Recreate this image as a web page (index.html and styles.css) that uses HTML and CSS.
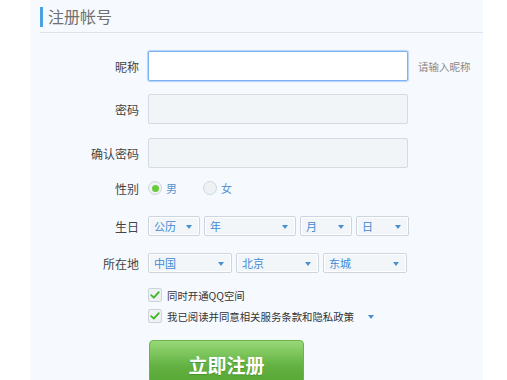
FILE: index.html
```html
<!DOCTYPE html>
<html lang="zh">
<head>
<meta charset="utf-8">
<link rel="stylesheet" href="styles.css">
</head>
<body>
<div class="panel">
  <div class="title"><span class="bar"></span><span class="title-text">注册帐号</span></div>
  <div class="form">
    <div class="row row-input first">
      <label class="label">昵称</label>
      <div class="input focus"></div>
      <span class="hint">请输入昵称</span>
    </div>
    <div class="row row-input">
      <label class="label">密码</label>
      <div class="input"></div>
    </div>
    <div class="row row-input">
      <label class="label">确认密码</label>
      <div class="input"></div>
    </div>
    <div class="row row-gender">
      <label class="label">性别</label>
      <span class="radio checked"></span><span class="opt">男</span>
      <span class="radio second"></span><span class="opt">女</span>
    </div>
    <div class="row row-select birth">
      <label class="label">生日</label>
      <div class="select w52">公历<i class="tri"></i></div>
      <div class="select w92">年<i class="tri"></i></div>
      <div class="select w52">月<i class="tri"></i></div>
      <div class="select w53">日<i class="tri"></i></div>
    </div>
    <div class="row row-select place">
      <label class="label">所在地</label>
      <div class="select w84">中国<i class="tri"></i></div>
      <div class="select w83">北京<i class="tri"></i></div>
      <div class="select w84">东城<i class="tri"></i></div>
    </div>
    <div class="row row-check c1">
      <span class="label"></span>
      <span class="checkbox"><svg viewBox="0 0 12 12" width="12" height="12"><path d="M2.2 6.2 L4.8 8.6 L9.8 3.2" fill="none" stroke="#3cb521" stroke-width="1.8" stroke-linecap="round" stroke-linejoin="round"/></svg></span>
      <span class="ctext">同时开通QQ空间</span>
    </div>
    <div class="row row-check c2">
      <span class="label"></span>
      <span class="checkbox"><svg viewBox="0 0 12 12" width="12" height="12"><path d="M2.2 6.2 L4.8 8.6 L9.8 3.2" fill="none" stroke="#3cb521" stroke-width="1.8" stroke-linecap="round" stroke-linejoin="round"/></svg></span>
      <span class="ctext">我已阅读并同意相关服务条款和隐私政策</span>
      <i class="tri tri-free"></i>
    </div>
    <div class="row row-btn">
      <span class="label"></span>
      <button class="submit">立即注册</button>
    </div>
  </div>
</div>
</body>
</html>
```
FILE: styles.css
```css
html, body {
  margin: 0;
  padding: 0;
  background: #ffffff;
  font-family: "Noto Sans CJK SC", "Noto Sans", sans-serif;
  height: 380px;
  overflow: hidden;
}
.panel {
  margin-left: 30px;
  width: 453px;
  height: 380px;
  background: #f6faff;
}
.title {
  margin-left: 10px;
  height: 32px;
  border-bottom: 1px solid #dde3ea;
  display: flex;
  align-items: center;
}
.bar {
  width: 3px;
  height: 20px;
  background: #4aa3e0;
  margin-right: 5px;
  margin-top: 1px;
}
.title-text {
  font-size: 16px;
  color: #707070;
  line-height: 20px;
}
.form {
  display: flex;
  flex-direction: column;
}
.row {
  display: flex;
  align-items: center;
}
.label {
  width: 109px;
  margin-right: 9px;
  text-align: right;
  font-size: 12px;
  color: #444;
  flex: none;
}
.row-input { height: 30px; margin-top: 13px; }
.row-input.first { margin-top: 18px; }
.row-input:nth-child(3) { margin-top: 14px; }
.input {
  width: 258px;
  height: 28px;
  border: 1px solid #d3dbe3;
  border-radius: 2px;
  background: #f1f5f8;
}
.input.focus {
  border-color: #7eb1f3;
  background: #ffffff;
  box-shadow: 0 0 1px 1px #b5d2f7;
}
.hint {
  margin-left: 10px;
  font-size: 10.5px;
  color: #888;
}
.row-gender { height: 20px; margin-top: 10px; }
.radio {
  width: 12px;
  height: 12px;
  border: 1px solid #cfd7df;
  border-radius: 50%;
  background: #eef2f5;
  display: flex;
  align-items: center;
  justify-content: center;
}
.radio.checked::after {
  content: "";
  width: 7px;
  height: 7px;
  border-radius: 50%;
  background: #6acb3a;
}
.radio.second { margin-left: 26px; }
.opt {
  margin-left: 4px;
  font-size: 11px;
  color: #5b95d0;
}
.row-select { height: 20px; gap: 4px; }
.row-select .label { margin-right: 5px; }
.birth { margin-top: 18px; }
.place { margin-top: 17px; }
.select {
  box-sizing: border-box;
  height: 20px;
  border: 1px solid #cdd6df;
  border-radius: 2px;
  background: #f2f6f9;
  box-shadow: inset 0 0 0 1px #ffffff;
  font-size: 11px;
  color: #3f8ad6;
  padding-left: 5px;
  display: flex;
  align-items: center;
  position: relative;
  line-height: 18px;
}
.w52 { width: 52px; }
.w53 { width: 53px; }
.w92 { width: 92px; }
.w84 { width: 84px; }
.w83 { width: 83px; }
.tri {
  width: 0;
  height: 0;
  border-left: 3px solid transparent;
  border-right: 3px solid transparent;
  border-top: 4px solid #4a8fd0;
  position: absolute;
  right: 7px;
  top: 8px;
}
.row-check { height: 16px; }
.c1 { margin-top: 14px; }
.c2 { margin-top: 5px; position: relative; }
.checkbox {
  width: 12px;
  height: 12px;
  border: 1px solid #cbd3db;
  border-radius: 2px;
  background: #eef2f5;
  display: flex;
  align-items: center;
  justify-content: center;
}
.checkbox svg { flex: none; }
.ctext {
  margin-left: 5px;
  font-size: 10.4px;
  color: #333;
}
.tri-free {
  position: static;
  margin-left: 14px;
  margin-top: 1px;
}
.row-btn { margin-top: 16px; }
.submit {
  width: 155px;
  height: 44px;
  border: 1px solid #6bb34a;
  border-radius: 4px;
  background: linear-gradient(#98d878, #62b141 60%, #58a836);
  color: #ffffff;
  font-family: "Noto Sans CJK SC", sans-serif;
  font-size: 19px;
  font-weight: bold;
  text-shadow: 0 1px 1px rgba(40, 100, 20, 0.4);
  padding: 4px 0 0 0;
  margin-left: 1px;
}
```
